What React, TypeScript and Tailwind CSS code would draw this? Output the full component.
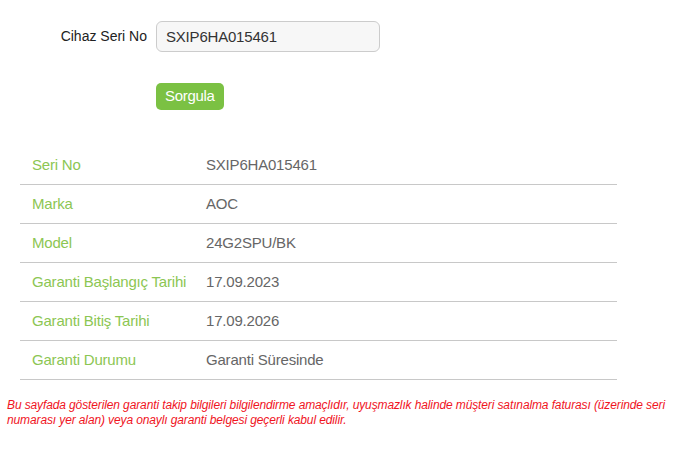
const rows: [string, string][] = [
  ['Seri No', 'SXIP6HA015461'],
  ['Marka', 'AOC'],
  ['Model', '24G2SPU/BK'],
  ['Garanti Başlangıç Tarihi', '17.09.2023'],
  ['Garanti Bitiş Tarihi', '17.09.2026'],
  ['Garanti Durumu', 'Garanti Süresinde'],
];

export default function App() {
  return (
    <div
      className="min-h-[453px] w-[675px] bg-white pt-[21px]"
      style={{ fontFamily: '"Liberation Sans", Arial, sans-serif' }}
    >
      <div className="flex items-center">
        <label className="w-[147px] text-right text-[14px] text-[#222]">
          Cihaz Seri No
        </label>
        <input
          readOnly
          value="SXIP6HA015461"
          className="ml-[9px] h-[31px] w-[224px] rounded-[6px] border border-[#ccc] bg-[#f7f7f7] px-[9px] text-[15px] tracking-[-0.2px] text-[#333] outline-none"
        />
      </div>

      <div className="mt-[31px] pl-[156px]">
        <button className="h-[27px] rounded-[5px] bg-[#7bc143] px-[9px] text-[15px] tracking-[-0.3px] text-white">
          Sorgula
        </button>
      </div>

      <div className="mx-[20px] mt-[36px] w-[597px]">
        {rows.map(([k, v]) => (
          <div
            key={k}
            className="flex h-[39px] items-center border-b border-[#c8c8c8] text-[15px] tracking-[-0.2px]"
          >
            <div className="w-[186px] pl-[12px] text-[#8cc653]">{k}</div>
            <div className="text-[#666]">{v}</div>
          </div>
        ))}
      </div>

      <p className="mt-[18px] px-[7px] text-[12px] leading-[15px] tracking-[-0.12px] text-[#f0141e] italic">
        Bu sayfada gösterilen garanti takip bilgileri bilgilendirme amaçlıdır, uyuşmazlık halinde müşteri satınalma faturası (üzerinde seri numarası yer alan) veya onaylı garanti belgesi geçerli kabul edilir.
      </p>
    </div>
  );
}
